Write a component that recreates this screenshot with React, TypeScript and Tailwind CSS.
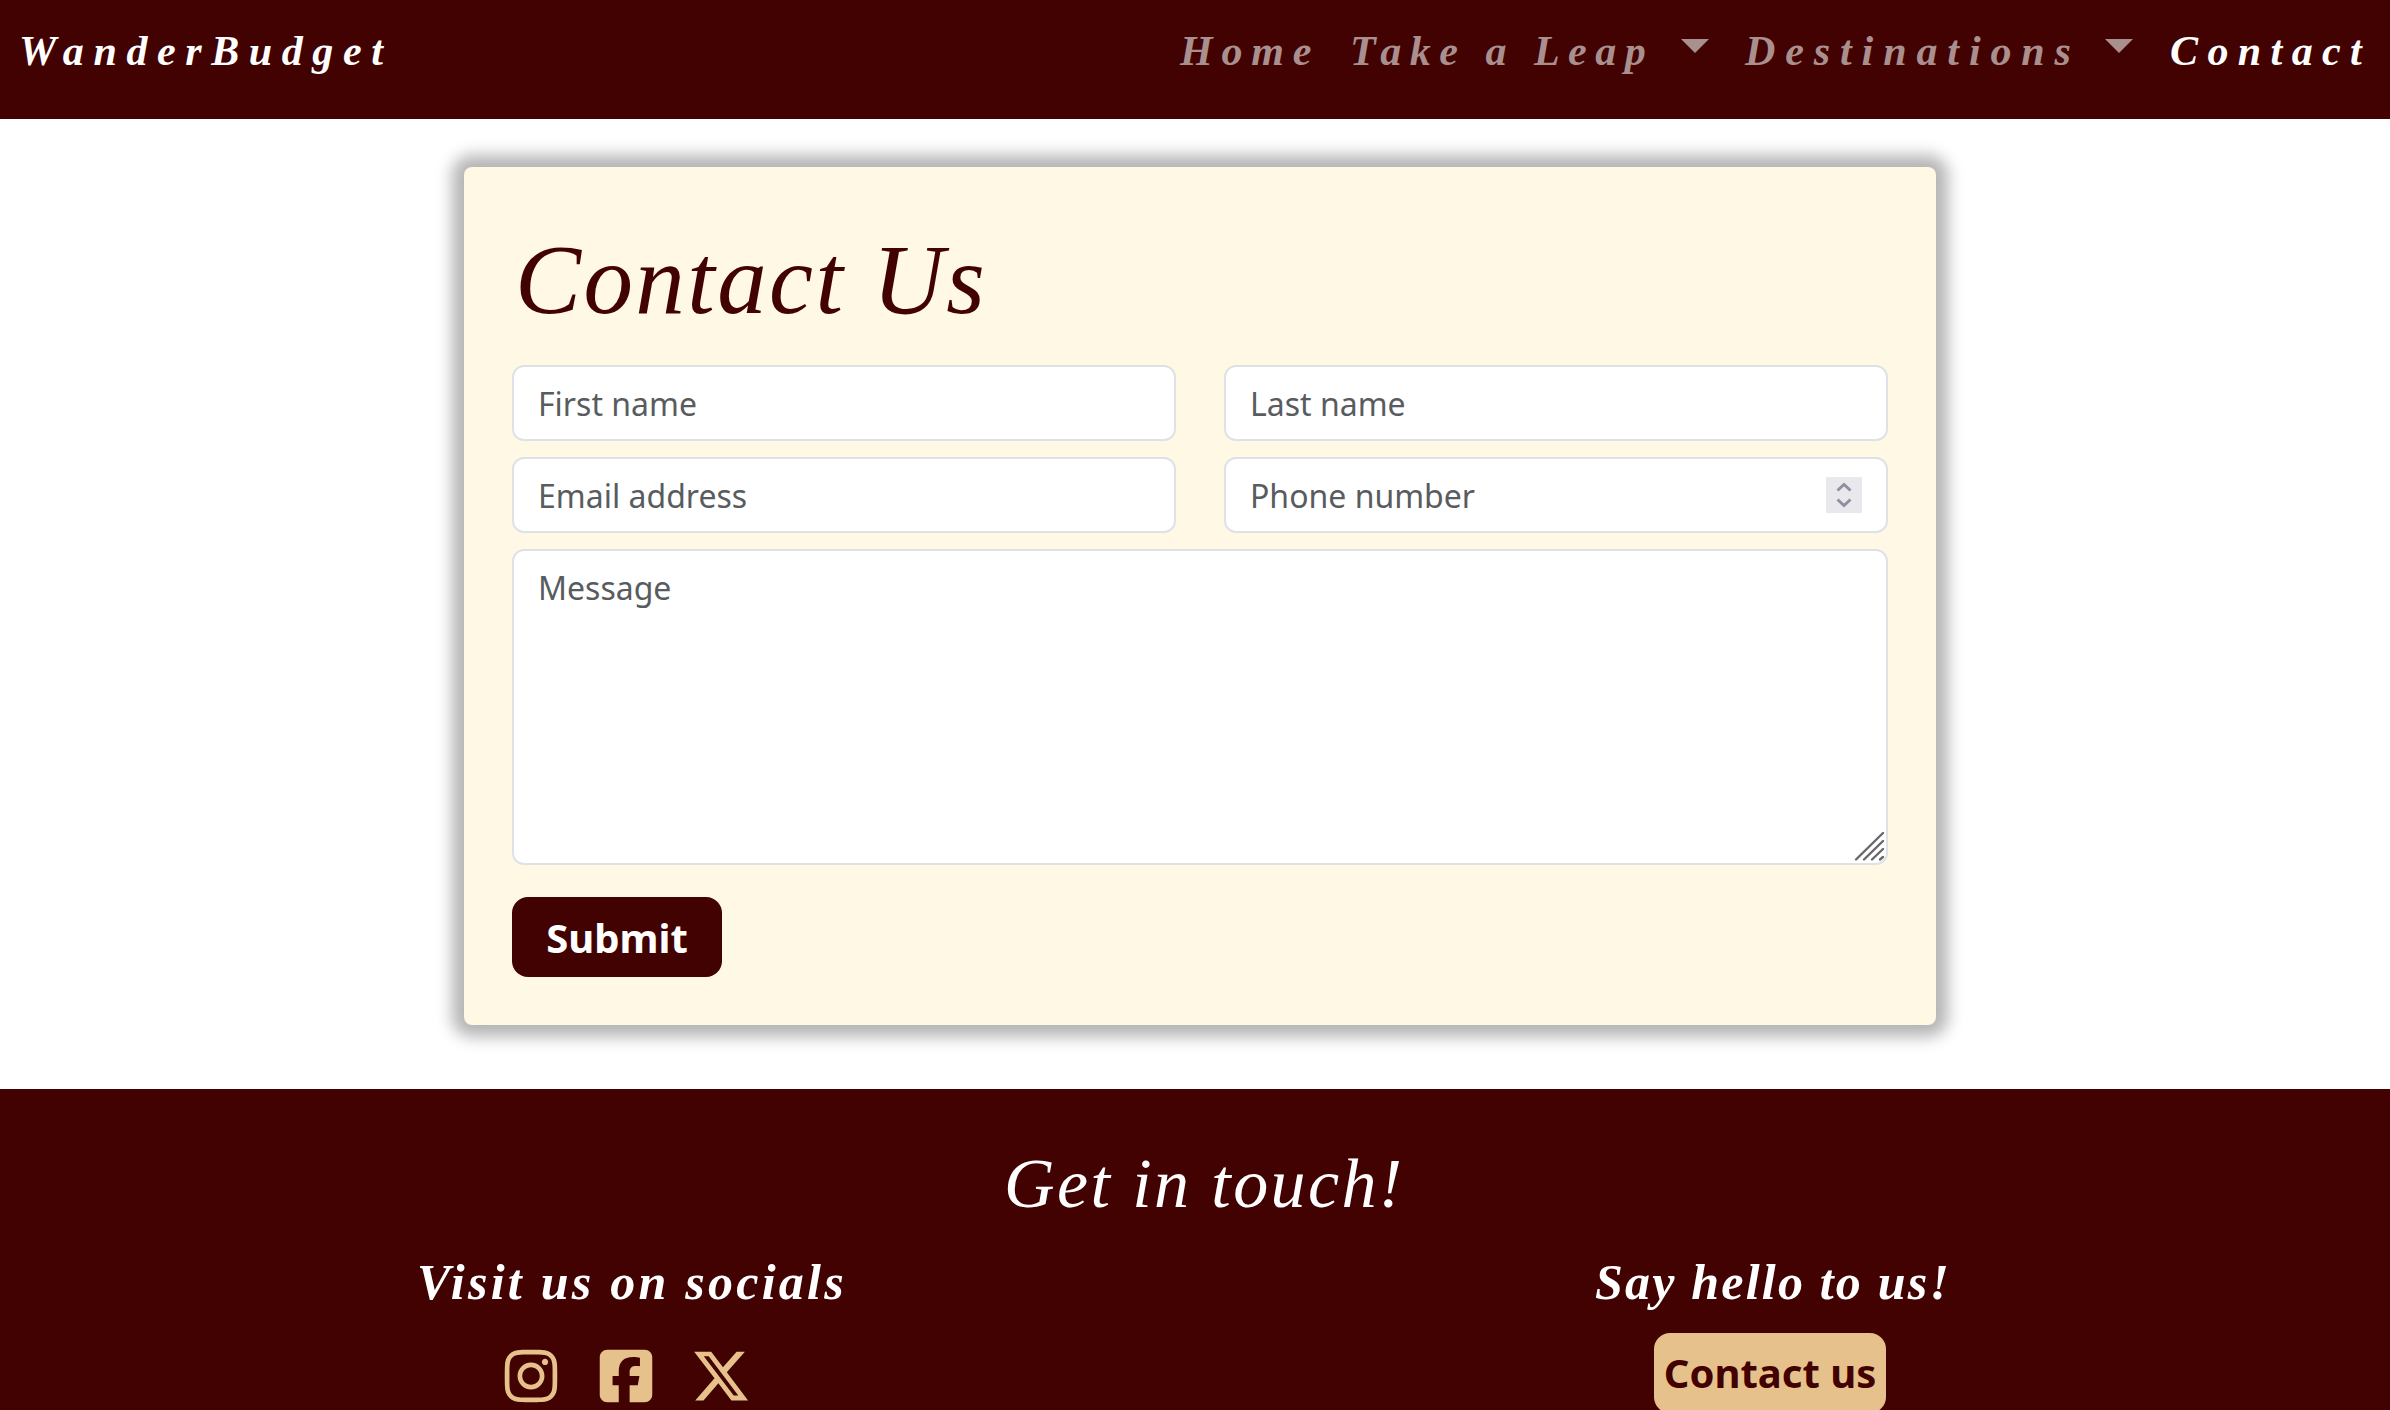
import type { ReactNode } from "react";
import { FaInstagram, FaSquareFacebook, FaXTwitter } from "react-icons/fa6";

const serif = "font-['Liberation_Serif',serif] italic whitespace-nowrap";

function Caret() {
  return <span className="mt-[39px] h-0 w-0 border-x-[14px] border-t-[14px] border-x-transparent border-t-[#aa8f8f]" />;
}

function NavLink({ className, children }: { className: string; children: ReactNode }) {
  return <a className={`${serif} pt-[27px] text-[42px] leading-[48px] font-bold ${className}`}>{children}</a>;
}

function Field({ label, children }: { label: string; children?: ReactNode }) {
  return (
    <div className="flex h-[76px] items-center justify-between rounded-xl border-2 border-[#dee2e6] bg-white px-6 text-[32px] leading-[48px] text-[#595c5f]">
      <span className="pt-0.5">{label}</span>
      {children}
    </div>
  );
}

function Spinner() {
  return (
    <span className="flex h-9 w-9 items-center justify-center bg-[#e9e9ed]">
      <svg width="36" height="36" viewBox="0 0 36 36" fill="none" stroke="#8f8f9d" strokeWidth="3">
        <path d="M11.5 13.5 18 7.5l6.500 6M11.500 22.500 18 28.500l6.500-6" />
      </svg>
    </span>
  );
}

export default function App() {
  return (
    <div className="flex h-[1410px] w-[2390px] flex-col overflow-hidden bg-white font-['Noto_Sans',sans-serif]">
      <nav className="flex h-[119px] shrink-0 items-start bg-[#420202]">
        <NavLink className="ml-[19px] w-[1161px] tracking-[9.6px] text-white">WanderBudget</NavLink>
        <NavLink className="w-[170px] tracking-[8.8px] text-[#aa8f8f]">Home</NavLink>
        <NavLink className="w-[331px] tracking-[8.500px] text-[#aa8f8f]">Take a Leap</NavLink>
        <Caret />
        <NavLink className="ml-[36px] w-[360px] tracking-[9.900px] text-[#aa8f8f]">Destinations</NavLink>
        <Caret />
        <NavLink className="ml-[37px] tracking-[9.400px] text-white">Contact</NavLink>
      </nav>

      <main className="flex h-[970px] shrink-0 items-start pt-12 pl-[464px]">
        <form className="flex h-[858px] w-[1472px] flex-col rounded-lg bg-[#fff8e5] px-12 shadow-[0_0_16px_12px_#b5b5b5]">
          <h1 className={`${serif} pt-[58px] pl-[3px] text-[99px] leading-[110px] tracking-[2.400px] text-[#420202]`}>Contact Us</h1>
          <div className="mt-[30px] grid grid-cols-2 gap-x-12 gap-y-4">
            <Field label="First name" />
            <Field label="Last name" />
            <Field label="Email address" />
            <Field label="Phone number">
              <Spinner />
            </Field>
            <div className="relative col-span-2 h-[316px] rounded-xl border-2 border-[#dee2e6] bg-white px-6 py-[13px] text-[32px] leading-[48px] text-[#595c5f]">
              Message
              <svg className="absolute right-0 bottom-0" width="34" height="34" viewBox="0 0 34 34" stroke="#68686b" strokeWidth="2.4" strokeLinecap="round">
                <path d="M4 30.500 31 4M12 30.500 31 12M20 30.500 31 20M28 30.500 31 28" />
              </svg>
            </div>
          </div>
          <button type="button" className="mt-8 flex h-20 w-[210px] items-center justify-center rounded-2xl bg-[#420202] pt-0.5 text-[40px] font-bold text-white">
            Submit
          </button>
        </form>
      </main>

      <footer className="h-[400px] shrink-0 bg-[#420202] pt-[55px] text-white">
        <h2 className={`${serif} pl-[1004px] text-[70px] leading-[80px] tracking-[2.400px]`}>Get in touch!</h2>
        <div className="flex items-start">
          <section className="w-[1180px] pt-[30px]">
            <h3 className={`${serif} pl-[417px] text-[50px] leading-[56px] font-bold tracking-[3.250px]`}>Visit us on socials</h3>
            <div className="mt-[36px] flex gap-[35px] pl-[501px] text-[60px] text-[#e6c18b]">
              <FaInstagram />
              <FaSquareFacebook />
              <FaXTwitter />
            </div>
          </section>
          <section className="pt-[30px]">
            <h3 className={`${serif} pl-[415px] text-[50px] leading-[56px] font-bold tracking-[2.200px]`}>Say hello to us!</h3>
            <button type="button" className="mt-[23px] ml-[474px] flex h-20 w-[232px] items-center justify-center rounded-2xl bg-[#e6c18b] text-[40px] font-bold whitespace-nowrap text-[#420202]">
              Contact us
            </button>
          </section>
        </div>
      </footer>
    </div>
  );
}
